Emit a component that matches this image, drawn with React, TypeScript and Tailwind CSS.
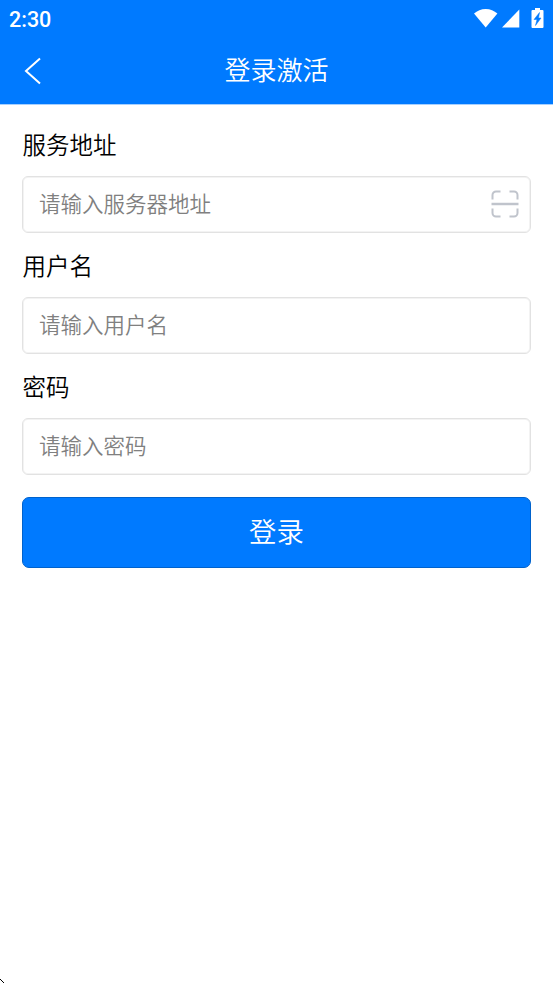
import { useState } from 'react';

interface Field {
  name: string;
  label: string;
  placeholder: string;
  type: string;
  scan?: boolean;
}

const fields: Field[] = [
  { name: 'server', label: '服务地址', placeholder: '请输入服务器地址', type: 'text', scan: true },
  { name: 'username', label: '用户名', placeholder: '请输入用户名', type: 'text' },
  { name: 'password', label: '密码', placeholder: '请输入密码', type: 'password' },
];

function StatusBar() {
  return (
    <div className="flex h-[38px] items-center pl-[9px] pr-[9px]">
      <span className="flex-1 pt-[2px] font-['Roboto','Noto_Sans_CJK_SC',sans-serif] text-[21.5px] font-medium leading-none">2:30</span>
      <svg className="mb-[2px]" width="24" height="19" viewBox="0 0 24 19" fill="currentColor">
        <path d="M0 4.500C3.200 1.800 7.200 0 11.700 0s8.500 1.800 11.700 4.500L11.700 18.500z" />
      </svg>
      <svg className="mb-[1px] ml-[4px]" width="18" height="19" viewBox="0 0 18 19" fill="currentColor">
        <path d="M17.300 0.500v18H0z" />
      </svg>
      <svg className="mb-[2px] ml-[11px]" width="13" height="20" viewBox="0 0 13 20">
        <path d="M4 0h5v2h2.500a1 1 0 0 1 1 1v16a1 1 0 0 1-1 1h-10a1 1 0 0 1-1-1V3a1 1 0 0 1 1-1H4z" fill="currentColor" />
        <path d="M8.500 4.500L3 11.500H6L4.500 17.500l5.500-7.500H7.500z" fill="#007aff" stroke="#007aff" strokeWidth="0.500" />
      </svg>
    </div>
  );
}

function ScanIcon() {
  return (
    <svg className="mb-[2px]" width="28" height="28" viewBox="0 0 28 28" fill="none" stroke="#c0c4cc" strokeWidth="2">
      <path d="M1.500 9.500V5a3.500 3.500 0 0 1 3.500-3.500h4.500M18.500 1.500H23A3.500 3.500 0 0 1 26.500 5v4.500M26.500 18.500V23a3.500 3.500 0 0 1-3.500 3.500h-4.500M9.500 26.500H5A3.500 3.500 0 0 1 1.500 23v-4.500" />
      <path d="M0.500 14h27" strokeWidth="2.500" />
    </svg>
  );
}

export default function App() {
  const [values, setValues] = useState<Record<string, string>>({});

  return (
    <div className="relative min-h-screen bg-white font-['Noto_Sans_CJK_SC',sans-serif] font-[350] text-black">
      <header className="h-[105px] border-b border-[#a6d0ff] bg-[#007aff] text-white">
        <StatusBar />
        <div className="grid h-[66px] grid-cols-[60px_1fr_60px] items-center">
          <button type="button" aria-label="返回" className="pl-[24px]">
            <svg width="18" height="28" viewBox="0 0 18 28" fill="none" stroke="currentColor" strokeWidth="2">
              <path d="M16 1.500L2 14l14 12.500" />
            </svg>
          </button>
          <h1 className="pb-[4px] text-center text-[26px] leading-[38px] font-[350]">登录激活</h1>
        </div>
      </header>

      <form className="px-[22px] pt-[21px]" onSubmit={(e) => e.preventDefault()}>
        {fields.map((field) => (
          <div key={field.name} className="h-[121px]">
            <label htmlFor={field.name} className="block h-[50px] pl-[0.5px] text-[23.5px] leading-[36px]">
              {field.label}
            </label>
            <div className="flex h-[57px] items-center rounded-[6px] border border-[#e2e2e2] pl-[16px] pr-[11px] shadow-[inset_0_0_0_1px_#f3f3f3]">
              <input
                id={field.name}
                type={field.type}
                placeholder={field.placeholder}
                value={values[field.name] || ''}
                onChange={(e) => setValues({ ...values, [field.name]: e.target.value })}
                className="h-full min-w-0 flex-1 pb-[4px] text-[21.5px] outline-none placeholder:text-[#808080]"
              />
              {field.scan && <ScanIcon />}
            </div>
          </div>
        ))}
        <button type="submit" className="mt-[8px] h-[71px] w-full rounded-[7px] border border-[#0062cc] bg-[#007aff] pb-[4px] text-[27.400px] text-white">
          登录
        </button>
      </form>

      {/* cursor tip in the corner */}
      <svg className="absolute bottom-0 left-0" width="4" height="4" viewBox="0 0 4 4" shapeRendering="crispEdges">
        <path d="M0 0h1v1H0zM1 1h1v1H1zM2 2h1v1H2zM3 3h1v1H3z" />
      </svg>
    </div>
  );
}
